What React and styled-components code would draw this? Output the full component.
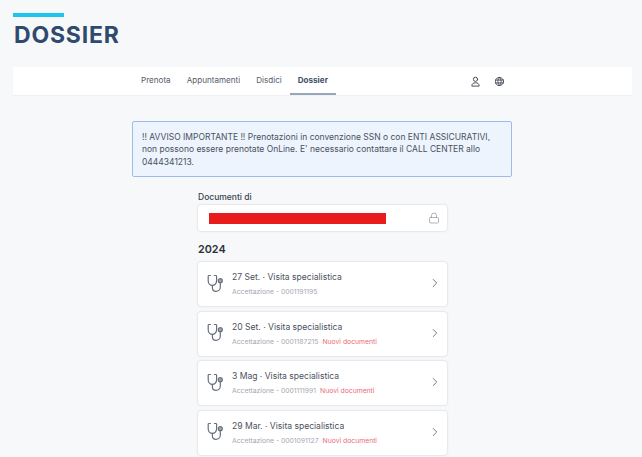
import React from "react";
import styled, { createGlobalStyle } from "styled-components";
import { Lock, ChevronRight } from "lucide-react";

const Global = createGlobalStyle`
  html, body { margin: 0; padding: 0; background: #f7f8f9; }
  body { font-family: Inter, "Liberation Sans", sans-serif; overflow: hidden; }
`;
const Page = styled.div`
  width: 642px; height: 457px; overflow: hidden; box-sizing: border-box;
  padding: 13px 10px 0 13px; display: flex; flex-direction: column;
`;
const Accent = styled.div`width: 51px; height: 4px; background: #1cc4ee;`;
const Title = styled.h1`
  margin: 3px 0 0 1px; font-size: 23px; line-height: 30px;
  font-weight: 700; color: #2f4a6d; letter-spacing: 0.8px;
`;
const Nav = styled.nav`
  margin-top: 17px; height: 28px; background: #fff; display: flex; align-items: stretch;
  padding-left: 120px; box-shadow: 0 1px 1px #eeeff1;
`;
const Tab = styled.a`
  box-sizing: border-box; padding: 0 8px; display: flex; align-items: center;
  font-size: 8.1px; color: ${p => p.$active ? "#3d4f68" : "#555c68"}; font-weight: ${p => p.$active ? 700 : 400};
  border-bottom: 2px solid ${p => p.$active ? "#9aa5b8" : "transparent"}; height: 28px;
`;
const NavIcons = styled.div`display: flex; align-items: center; gap: 13px; margin-left: 134px; color: #3d4450;`;
const Content = styled.main`margin-top: 26px; padding-left: 119px; display: flex; flex-direction: column;`;
const Alert = styled.div`
  box-sizing: border-box; width: 380px; height: 56px; padding: 8.5px 9px; background: #edf4fe;
  border: 1px solid #9dbde8; border-radius: 2px; font-size: 8.5px; line-height: 12.6px; color: #4a515d;
`;
const Form = styled.section`margin: 14px 0 0 66px; width: 249px; display: flex; flex-direction: column;`;
const Label = styled.label`font-size: 8.5px; line-height: 12px; font-weight: 500; color: #3b4350;`;
const LockedField = styled.div`
  box-sizing: border-box; margin-top: 2px; height: 26px; background: #fff; border-radius: 3px;
  box-shadow: 0 0 2px rgba(40,50,70,.25); padding: 0 7px 0 11px; display: flex; align-items: center;
  justify-content: space-between; color: #8d949e;
`;
const Redaction = styled.div`width: 177px; height: 11px; background: #e81c1c;`;
const Year = styled.h2`margin: 12px 0 5px; font-size: 10.8px; line-height: 14px; font-weight: 600; color: #2c313a;`;
const List = styled.div`display: flex; flex-direction: column; gap: 5.5px;`;
const Card = styled.article`
  box-sizing: border-box; height: 44px; background: #fff; border-radius: 3px;
  box-shadow: 0 0 2px rgba(40,50,70,.28); padding: 0 5px 2px 9px; display: flex; align-items: center;
  color: #68707c;
`;
const Body = styled.div`flex: 1; margin-left: 7px; padding-top: 2px; display: flex; flex-direction: column; gap: 4px; min-width: 0;`;
const CardTitle = styled.div`font-size: 8.55px; line-height: 11px; color: #4a515d;`;
const Meta = styled.div`display: flex; gap: 4px; font-size: 6.8px; line-height: 9px; color: #a3a8b1;`;
const Badge = styled.span`color: #ec6a78;`;
const IconSvg = styled.svg`
  display: block; flex: none; fill: none; stroke: currentColor; stroke-linecap: round; stroke-linejoin: round;
`;

const UserGlyph = () => (
  <IconSvg width="11" height="11" viewBox="0 0 12 12" strokeWidth="1">
    <circle cx="6" cy="3.6" r="2.3" />
    <path d="M2 10.6c0-2.2 1.7-3.2 4-3.2s4 1 4 3.2z" />
  </IconSvg>
);
const GlobeGlyph = () => (
  <IconSvg width="11" height="11" viewBox="0 0 12 12" strokeWidth="1">
    <circle cx="6" cy="6" r="4.4" />
    <path d="M1.8 4.4h8.4M1.8 7.6h8.4M6 1.6c-2.4 2.6-2.4 6.2 0 8.8M6 1.6c2.4 2.6 2.4 6.2 0 8.8" />
  </IconSvg>
);
const StethGlyph = () => (
  <IconSvg width="18" height="19" viewBox="0 0 18 19" strokeWidth="1.2">
    <path d="M3.4 1.5H2c-.5 0-.8.3-.8.8v4.4c0 2.700 1.900 4.700 4.200 4.700s4.200-2 4.200-4.700V2.300c0-.5-.3-.8-.8-.8H7.400" />
    <path d="M5.400 11.400v2.300c0 2 1.500 3.600 3.600 3.600 2.400 0 4.300-1.700 4.300-4V8.800" />
    <circle cx="13.300" cy="6.700" r="2" fill="#a3a9b3" />
  </IconSvg>
);

const items = [
  ["27 Set. · Visita specialistica", "0001191195", false],
  ["20 Set. · Visita specialistica", "0001187215", true],
  ["3 Mag · Visita specialistica", "0001111991", true],
  ["29 Mar. · Visita specialistica", "0001091127", true],
];

export default function App() {
  return (
    <Page>
      <Global />
      <Accent />
      <Title>DOSSIER</Title>
      <Nav>
        <Tab>Prenota</Tab>
        <Tab>Appuntamenti</Tab>
        <Tab>Disdici</Tab>
        <Tab $active>Dossier</Tab>
        <NavIcons>
          <UserGlyph />
          <GlobeGlyph />
        </NavIcons>
      </Nav>
      <Content>
        <Alert>
          !! AVVISO IMPORTANTE !! Prenotazioni in convenzione SSN o con ENTI ASSICURATIVI,
          non possono essere prenotate OnLine. E' necessario contattare il CALL CENTER allo 0444341213.
        </Alert>
        <Form>
          <Label>Documenti di</Label>
          <LockedField>
            <Redaction />
            <Lock size={12} strokeWidth={1.4} />
          </LockedField>
          <Year>2024</Year>
          <List>
            {items.map(([title, code, isNew]) => (
              <Card key={code}>
                <StethGlyph />
                <Body>
                  <CardTitle>{title}</CardTitle>
                  <Meta>
                    <span>Accettazione - {code}</span>
                    {isNew && <Badge>Nuovi documenti</Badge>}
                  </Meta>
                </Body>
                <ChevronRight size={14} strokeWidth={1.6} />
              </Card>
            ))}
          </List>
        </Form>
      </Content>
    </Page>
  );
}
